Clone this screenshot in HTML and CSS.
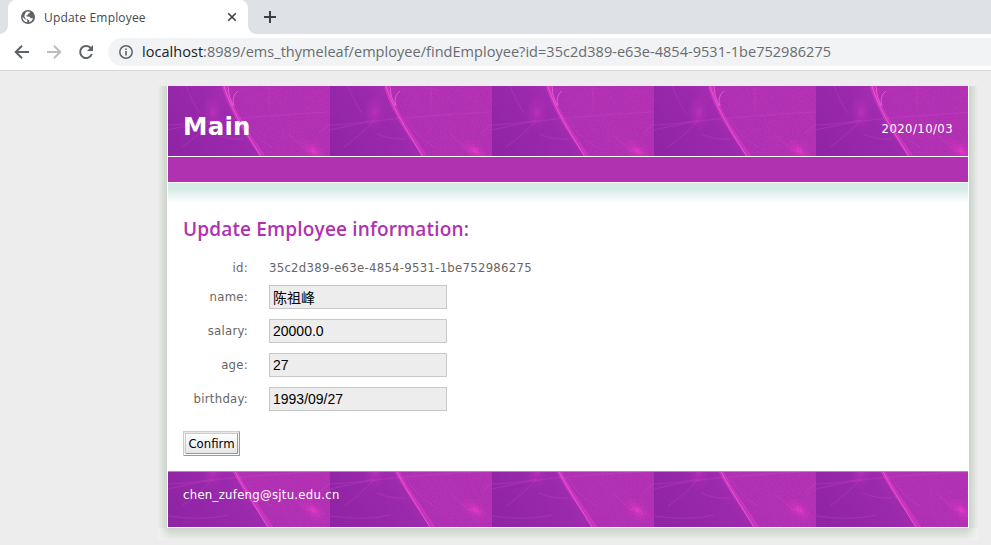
FILE: index.html
```html
<!DOCTYPE html>
<html lang="en">
<head>
<meta charset="utf-8">
<title>Update Employee</title>
<link rel="stylesheet" href="styles.css">
</head>
<body>
<header class="browser">
  <div class="tabs">
    <div class="tab">
      <svg class="globe" viewBox="0 0 14 14"><circle cx="7" cy="7" r="7" fill="#5f6368"/><path d="M1.6 6.8 4 9.2l2.2.3v2.8A5.4 5.4 0 0 1 1.6 6.8zM5 2.1l1.5-.5 2.4.2-.3 1.4-1.6.5-.2 1.4-1.6.4.4 1 2.9.2 1.2 1.6h2.4A5.5 5.5 0 0 1 8 12.3l.4-1.6-1.5-1.4-2-.2-1.6-2.7.5-1.9z" fill="#fff"/></svg>
      <span class="tab-title">Update Employee</span>
      <svg class="close" viewBox="0 0 10 10"><path d="m1.2 1.2 7.6 7.6m0-7.6L1.2 8.8" stroke="#3c4043" stroke-width="1.6"/></svg>
    </div>
    <svg class="plus" viewBox="0 0 12 12"><path d="M6 0v12M0 6h12" stroke="#3c4043" stroke-width="2"/></svg>
  </div>
  <div class="toolbar">
    <svg class="nav-icon" viewBox="0 0 16 16"><path d="M15 8H2.5M8 1.7 1.7 8 8 14.3" fill="none" stroke="#5f6368" stroke-width="2"/></svg>
    <svg class="nav-icon" viewBox="0 0 16 16"><path d="M1 8h12.5M8 1.7 14.3 8 8 14.3" fill="none" stroke="#babcbe" stroke-width="2"/></svg>
    <svg class="nav-icon" viewBox="0 0 16 16"><path d="M13.8 10A6 6 0 1 1 12.4 3.8L14 5.4" fill="none" stroke="#5f6368" stroke-width="2"/><path d="M15 1v6H9z" fill="#5f6368"/></svg>
    <div class="address">
      <svg class="info" viewBox="0 0 14 14"><circle cx="7" cy="7" r="6.2" fill="none" stroke="#5f6368" stroke-width="1.5"/><path d="M7 6.1v4.4M7 3.5v1.6" stroke="#5f6368" stroke-width="1.6"/></svg>
      <span class="url"><b>localhost</b>:8989/ems_thymeleaf/employee/findEmployee?id=35c2d389-e63e-4854-9531-1be752986275</span>
    </div>
  </div>
</header>
<main class="stage">
  <div class="frame">
    <div class="sheet">
      <div class="banner">
        <svg class="texture" width="800" height="70">
          <defs>
            <linearGradient id="base" x1="0" y1=".7" x2="1" y2=".35"><stop offset="0" stop-color="#8e24a4"/><stop offset=".4" stop-color="#9c29ad"/><stop offset=".6" stop-color="#b030b4"/><stop offset="1" stop-color="#b431b3"/></linearGradient>
            <radialGradient id="glow"><stop offset="0" stop-color="#f03ecf"/><stop offset=".35" stop-color="#d737c0" stop-opacity=".6"/><stop offset="1" stop-color="#bd30b6" stop-opacity="0"/></radialGradient>
            <filter id="grain" x="0" y="0" width="1" height="1"><feTurbulence type="fractalNoise" baseFrequency=".75" numOctaves="2" seed="4"/><feColorMatrix values="0 0 0 0 .3  0 0 0 0 .02  0 0 0 0 .4  1.6 0 0 0 -.6"/></filter>
            <pattern id="fibre" width="162" height="84" patternUnits="userSpaceOnUse">
              <rect width="162" height="84" fill="url(#base)"/>
              <path d="M57 0C63 20 72 36 84 53L106 84H162V0z" fill="#b833b5" opacity=".65"/>
              <ellipse cx="45" cy="26" rx="12" ry="20" fill="url(#glow)" opacity=".45"/>
              <ellipse cx="145" cy="65" rx="20" ry="11" transform="rotate(38 145 65)" fill="url(#glow)"/>
              <rect width="162" height="84" filter="url(#grain)" opacity=".6"/>
              <g fill="none" stroke="#dc45cb">
                <path d="M56 0C61 17 70 33 81 50L104 84" stroke="#d837c4" stroke-width="4.5" opacity=".7"/>
                <path d="M56 0C61 17 69 31 79 48L101 84M60 0q0 10 5 20M70 5q-7 5-4 15" stroke="#ee61d8" stroke-width="1" opacity=".75"/>
                <path d="M0 44C30 37 50 34 75 32S125 28 162 26M0 39Q25 38 45 34M18 0Q25 17 32 27M44 35Q25 54 14 61M47 48Q61 54 76 53M76 32q8 18 28 29M101 0v25M120 48q8 7 19 17M151 47l11-9M0 71q35 5 60-1" stroke-width=".8" opacity=".32"/>
              </g>
            </pattern>
          </defs>
          <rect width="800" height="70" fill="url(#fibre)"/>
        </svg>
        <h1>Main</h1>
        <span class="date">2020/10/03</span>
      </div>
      <div class="menu"></div>
      <section class="content">
        <h2>Update Employee information:</h2>
        <form>
          <div class="row id-row"><span class="label">id:</span><span class="id">35c2d389-e63e-4854-9531-1be752986275</span></div>
          <div class="row"><label class="label" for="name">name:</label><input id="name" type="text" value="陈祖峰"></div>
          <div class="row"><label class="label" for="salary">salary:</label><input id="salary" type="text" value="20000.0"></div>
          <div class="row"><label class="label" for="age">age:</label><input id="age" type="text" value="27"></div>
          <div class="row"><label class="label" for="birthday">birthday:</label><input id="birthday" type="text" value="1993/09/27"></div>
          <button type="button">Confirm</button>
        </form>
      </section>
      <footer class="footer">
        <svg class="texture" width="800" height="55" viewBox="0 27 800 55"><rect y="27" width="800" height="55" fill="url(#fibre)"/></svg>
        <span class="mail">chen_zufeng@sjtu.edu.cn</span>
      </footer>
    </div>
  </div>
</main>
</body>
</html>
```
FILE: styles.css
```css
* { box-sizing: border-box; }
body { margin: 0; height: 545px; overflow: hidden; background: #ededed; color: #666; font: 13px/16px "DejaVu Sans Condensed", "DejaVu Sans", sans-serif; letter-spacing: .27px; }
svg { display: block; flex: none; }
.browser { height: 71px; background: #fff; border-bottom: 1px solid #d8d9da; letter-spacing: 0; }
.tabs { display: flex; height: 34px; background: #dee1e6; padding-left: 8px; }
.tab { position: relative; display: flex; align-items: center; width: 240px; height: 34px; padding: 0 11px 0 13px; background: #fff; border-radius: 8px 8px 0 0; }
.tab::before, .tab::after { content: ""; position: absolute; bottom: 0; width: 8px; height: 8px; }
.tab::before { left: -8px; background: radial-gradient(circle at 0 0, transparent 7.5px, #fff 8px); }
.tab::after { right: -8px; background: radial-gradient(circle at 100% 0, transparent 7.5px, #fff 8px); }
.globe { width: 14px; height: 14px; }
.tab-title { flex: 1; padding: 1px 0 0 9px; color: #45484c; font: 12px/16px "Open Sans", sans-serif; letter-spacing: .18px; }
.close { width: 10px; height: 10px; }
.plus { width: 12px; height: 12px; margin: 11px 0 0 16px; }
.toolbar { display: flex; align-items: center; height: 36px; padding-left: 14px; gap: 16px; }
.nav-icon { width: 16px; height: 16px; }
.address { display: flex; align-items: center; flex: 1; height: 28px; margin-left: -2px; padding-left: 11px; background: #f1f3f4; border-radius: 14px 0 0 14px; }
.info { width: 14px; height: 14px; }
.url { margin-left: 9px; color: #696c70; font: 14.5px/20px "Open Sans", sans-serif; letter-spacing: .04px; white-space: nowrap; }
.url b { color: #202124; font-weight: 400; }
.stage { padding: 15px 0 0 158px; }
.frame { width: 820px; height: 454px; padding: 0 10px 12px 9px; background: linear-gradient(90deg, #ededed, #cbd3ca 9px, #cbd3ca 811px, #ededed 820px); position: relative; }
.frame::after { content: ""; position: absolute; left: 0; right: 0; bottom: 0; height: 12px; background: linear-gradient(90deg, #f1f2f0, transparent 12px, transparent 808px, #f1f2f0), linear-gradient(#cbd3ca, #edefec); }
.sheet { width: 802px; height: 442px; background: #fff; padding: 0 1px 1px; }
.banner { position: relative; display: flex; align-items: center; justify-content: space-between; height: 70px; padding: 0 15px; color: #fff; }
.texture { position: absolute; inset: 0; }
h1 { position: relative; margin: 12px 0 0; font: bold 24.5px/32px "DejaVu Sans", sans-serif; }
.date { position: relative; margin-top: 15px; letter-spacing: .4px; }
.menu { height: 25px; margin: 1px 0; background: #b032b0; }
.content { height: 288px; padding: 34px 15px 0; background: linear-gradient(#d6eae8 0, #d6eae8 6px, #fff 20px); }
h2 { margin: 0; color: #b032b0; font: 600 19px/24px "Open Sans", sans-serif; letter-spacing: .16px; white-space: nowrap; }
.row { display: flex; height: 24px; margin-bottom: 10px; }
.id-row { height: 16px; margin: 19px 0 9px; }
.label { width: 65px; margin-right: 21px; padding-top: 4px; text-align: right; }
.id-row .label { padding-top: 0; }
input { width: 178px; height: 24px; padding: 1px 3px; border: 1px solid #c8c8c8; background: #ededed; color: #000; font: 14px "Liberation Sans", "Noto Sans CJK SC", sans-serif; }
button { display: block; width: 57px; height: 25px; margin-top: 20px; padding: 0; border: 3px double #999; border-color: #ccc #999 #999 #ccc; background: linear-gradient(#fff, #e5e5e5); color: #000; font: 13px/17px "DejaVu Sans Condensed", "DejaVu Sans", sans-serif; }
.footer { position: relative; height: 56px; border-top: 1px solid #8ab43c; padding: 15px 15px 14px; color: #fff; }
.mail { position: relative; }
```
